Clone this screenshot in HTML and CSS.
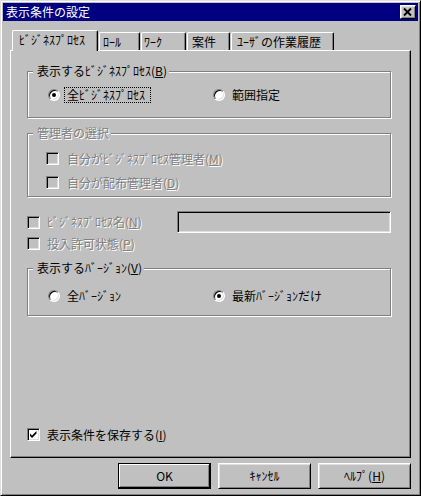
FILE: index.html
```html
<!DOCTYPE html>
<html lang="ja">
<head>
<meta charset="utf-8">
<title>表示条件の設定</title>
<link rel="stylesheet" href="styles.css">
</head>
<body>
<div class="window">
  <div class="titlebar">
    <span class="title">表示条件の設定</span>
    <span class="close">
      <svg width="12" height="10" viewBox="0 0 12 10"><path d="M2 1.5 L9 8.5 M9 1.5 L2 8.5" stroke="#000" stroke-width="1.8" fill="none"/></svg>
    </span>
  </div>
  <div class="body">
    <div class="tabs">
      <div class="tab active t1">ﾋﾞｼﾞﾈｽﾌﾟﾛｾｽ</div>
      <div class="tab t2">ﾛｰﾙ</div>
      <div class="tab t3">ﾜｰｸ</div>
      <div class="tab t4">案件</div>
      <div class="tab t5">ﾕｰｻﾞの作業履歴</div>
    </div>
    <div class="panel">
      <div class="group g1">
        <span class="legend">表示するﾋﾞｼﾞﾈｽﾌﾟﾛｾｽ(<u>B</u>)</span>
        <div class="opts">
          <div class="opt"><span class="radio on"></span><span class="lbl focus">全ﾋﾞｼﾞﾈｽﾌﾟﾛｾｽ</span></div>
          <div class="opt"><span class="radio"></span><span class="lbl">範囲指定</span></div>
        </div>
      </div>
      <div class="group g2">
        <span class="legend dis">管理者の選択</span>
        <div class="row sub"><span class="chk off"></span><span class="dis">自分がﾋﾞｼﾞﾈｽﾌﾟﾛｾｽ管理者(<u>M</u>)</span></div>
        <div class="row sub second"><span class="chk off"></span><span class="dis">自分が配布管理者(<u>D</u>)</span></div>
      </div>
      <div class="row rowname"><span class="chk off"></span><span class="dis">ﾋﾞｼﾞﾈｽﾌﾟﾛｾｽ名(<u>N</u>)</span><span class="textbox"></span></div>
      <div class="row rowperm"><span class="chk off"></span><span class="dis">投入許可状態(<u>P</u>)</span></div>
      <div class="group g3">
        <span class="legend">表示するﾊﾞｰｼﾞｮﾝ(<u>V</u>)</span>
        <div class="opts">
          <div class="opt"><span class="radio"></span><span class="lbl">全ﾊﾞｰｼﾞｮﾝ</span></div>
          <div class="opt"><span class="radio on"></span><span class="lbl">最新ﾊﾞｰｼﾞｮﾝだけ</span></div>
        </div>
      </div>
      <div class="row rowsave"><span class="chk"><svg width="9" height="9" viewBox="0 0 9 9"><path d="M1 3.5 L3 5.5 L7.5 1 L7.5 3.5 L3 8 L1 6 Z" fill="#000"/></svg></span><span>表示条件を保存する(<u>I</u>)</span></div>
    </div>
    <div class="buttons">
      <div class="btn default">OK</div>
      <div class="btn">ｷｬﾝｾﾙ</div>
      <div class="btn">ﾍﾙﾌﾟ(<u>H</u>)</div>
    </div>
  </div>
</div>
</body>
</html>
```
FILE: styles.css
```css
html, body {
  margin: 0;
  padding: 0;
  background: #c0c0c0;
}
body {
  font-family: "Noto Sans CJK JP", "Noto Sans", sans-serif;
  font-size: 12px;
  line-height: 14px;
  color: #000;
}
.window {
  box-sizing: border-box;
  width: 421px;
  height: 496px;
  border: 1px solid;
  border-color: #dfdfdf #000 #000 #dfdfdf;
  box-shadow: inset 1px 1px 0 #fff, inset -1px -1px 0 #808080;
  padding: 2px;
  background: #c0c0c0;
  display: flex;
  flex-direction: column;
}
.titlebar {
  height: 18px;
  flex: 0 0 18px;
  background: #000080;
  display: flex;
  align-items: center;
  padding-left: 3px;
  padding-right: 2px;
}
.title {
  color: #fff;
  flex: 1;
  line-height: 14px;
}
.close {
  box-sizing: border-box;
  width: 16px;
  height: 14px;
  background: #c0c0c0;
  border: 1px solid;
  border-color: #fff #000 #000 #fff;
  box-shadow: inset 1px 1px 0 #dfdfdf, inset -1px -1px 0 #808080;
  display: flex;
  align-items: center;
  justify-content: center;
}
.close svg { display: block; }
.body {
  flex: 1;
  display: flex;
  flex-direction: column;
  padding: 9px 7px 0 7px;
}
.tabs {
  height: 20px;
  display: flex;
  align-items: flex-end;
  padding-left: 2px;
  gap: 1px;
}
.tab {
  box-sizing: border-box;
  height: 18px;
  border-top: 1px solid #fff;
  border-left: 1px solid #fff;
  border-right: 1px solid #000;
  border-radius: 2px 2px 0 0;
  box-shadow: inset -1px 0 0 #808080;
  padding-left: 4px;
  padding-top: 2px;
  line-height: 14px;
  white-space: nowrap;
  background: #c0c0c0;
}
.tab.active {
  height: 21px;
  margin-bottom: -1px;
  position: relative;
  z-index: 1;
  padding-left: 6px;
  padding-top: 2px;
}
.t1 { width: 86px; }
.t2 { width: 41px; padding-left: 3px; }
.t3 { width: 45px; padding-left: 2px; }
.t4 { width: 43px; }
.t5 { width: 103px; padding-left: 5px; }
.panel {
  box-sizing: border-box;
  height: 408px;
  flex: 0 0 408px;
  border: 1px solid;
  border-color: #fff #000 #000 #fff;
  box-shadow: inset -1px -1px 0 #808080;
  padding: 20px 19px 0 16px;
  display: flex;
  flex-direction: column;
}
.group {
  position: relative;
  box-sizing: border-box;
  border: 1px solid #808080;
  box-shadow: 1px 1px 0 #fff, inset 1px 1px 0 #fff;
}
.legend {
  position: absolute;
  top: -8px;
  left: 5px;
  padding: 0 2px 0 4px;
  background: #c0c0c0;
  line-height: 14px;
  white-space: nowrap;
}
.g1 {
  height: 47px;
  padding-top: 15px;
}
.g2 {
  height: 64px;
  margin-top: 15px;
  padding-top: 18px;
  padding-left: 18px;
}
.g3 {
  height: 48px;
  margin-top: 18px;
  padding-top: 19px;
}
.opts {
  display: grid;
  grid-template-columns: 165px auto;
  padding-left: 20px;
}
.opt {
  display: flex;
  align-items: center;
  height: 16px;
}
.radio {
  box-sizing: border-box;
  width: 12px;
  height: 12px;
  flex: 0 0 12px;
  border-radius: 50%;
  border: 1px solid;
  border-color: #808080 #fff #fff #808080;
  box-shadow: inset 1px 1px 0 #000, inset -1px -1px 0 #dfdfdf;
  background: #fff;
  margin-right: 4px;
  display: flex;
  align-items: center;
  justify-content: center;
}
.radio.on::after {
  content: "";
  width: 4px;
  height: 4px;
  border-radius: 50%;
  background: #000;
}
.lbl {
  padding: 1px 3px;
  line-height: 14px;
  white-space: nowrap;
}
.focus {
  outline: 1px dotted #000;
  outline-offset: -1px;
  padding: 1px 6px 1px 3px;
}
.row {
  display: flex;
  align-items: center;
  white-space: nowrap;
}
.sub {
  height: 13px;
}
.sub .chk { margin-right: 8px; }
.sub.second { margin-top: 11px; }
.chk {
  box-sizing: border-box;
  width: 13px;
  height: 13px;
  flex: 0 0 13px;
  border: 1px solid;
  border-color: #808080 #fff #fff #808080;
  box-shadow: inset 1px 1px 0 #000, inset -1px -1px 0 #dfdfdf;
  background: #fff;
  margin-right: 7px;
  display: flex;
  align-items: center;
  justify-content: center;
}
.chk svg { display: block; }
.chk.off { background: #c0c0c0; }
.dis {
  color: #808080;
  text-shadow: 1px 1px 0 #fff;
}
.rowname {
  height: 22px;
  margin-top: 14px;
}
.textbox {
  box-sizing: border-box;
  margin-left: auto;
  width: 214px;
  height: 22px;
  border: 1px solid;
  border-color: #808080 #fff #fff #808080;
  box-shadow: inset 1px 1px 0 #000, inset -1px -1px 0 #dfdfdf;
  background: #c0c0c0;
}
.rowperm {
  height: 13px;
  margin-top: 4px;
}
.rowsave {
  height: 13px;
  margin-top: 112px;
}
.buttons {
  margin-top: 5px;
  display: flex;
  justify-content: flex-end;
  gap: 7px;
}
.btn {
  box-sizing: border-box;
  width: 93px;
  height: 26px;
  border: 1px solid;
  border-color: #fff #000 #000 #fff;
  box-shadow: inset 1px 1px 0 #dfdfdf, inset -1px -1px 0 #808080;
  display: flex;
  align-items: center;
  justify-content: center;
  line-height: 14px;
}
.btn.default {
  border-color: #000;
  box-shadow: inset -1px -1px 0 #000, inset 1px 1px 0 #fff, inset -2px -2px 0 #808080;
}
```
